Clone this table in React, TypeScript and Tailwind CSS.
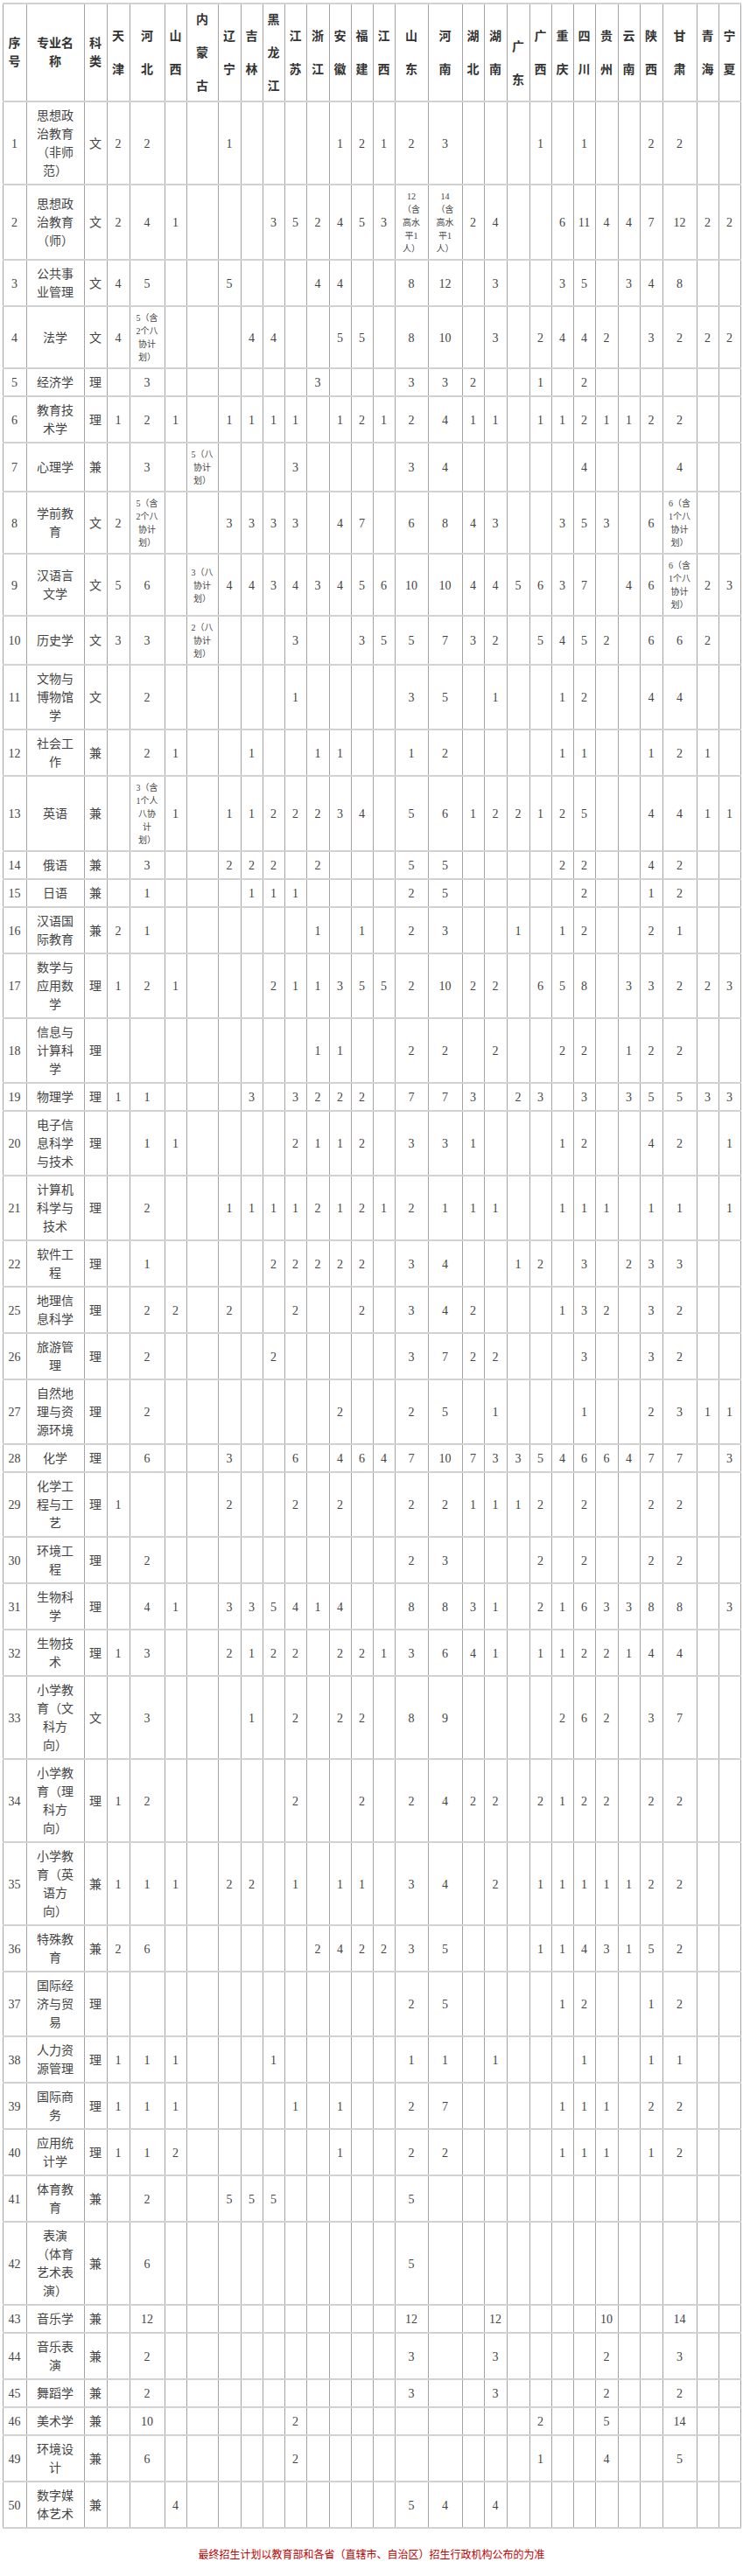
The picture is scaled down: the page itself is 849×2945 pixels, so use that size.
type Row = {
  no: number;
  name: string;
  kind: string;
  v: Record<string, string>;
};

const PROVINCES = [
  "天津", "河北", "山西", "内蒙古", "辽宁", "吉林", "黑龙江", "江苏", "浙江", "安徽",
  "福建", "江西", "山东", "河南", "湖北", "湖南", "广东", "广西", "重庆", "四川",
  "贵州", "云南", "陕西", "甘肃", "青海", "宁夏",
];

// column widths, written out so tailwind picks them up
const COLS = [
  "w-[26px]", "w-[40px]", "w-[25px]", "w-[36px]", "w-[26px]", "w-[25px]", "w-[25px]", "w-[25px]", "w-[26px]", "w-[25px]",
  "w-[25px]", "w-[25px]", "w-[38px]", "w-[39px]", "w-[25px]", "w-[26px]", "w-[26px]", "w-[25px]", "w-[25px]", "w-[25px]",
  "w-[26px]", "w-[25px]", "w-[26px]", "w-[39px]", "w-[25px]", "w-[25px]",
];

const ROWS: Row[] = [
  { no: 1, name: "思想政|治教育|（非师|范）", kind: "文", v: { 天津: "2", 河北: "2", 辽宁: "1", 安徽: "1", 福建: "2", 江西: "1", 山东: "2", 河南: "3", 广西: "1", 四川: "1", 陕西: "2", 甘肃: "2" } },
  { no: 2, name: "思想政|治教育|（师）", kind: "文", v: { 天津: "2", 河北: "4", 山西: "1", 黑龙江: "3", 江苏: "5", 浙江: "2", 安徽: "4", 福建: "5", 江西: "3", 山东: "12|（含|高水|平1|人）", 河南: "14|（含|高水|平1|人）", 湖北: "2", 湖南: "4", 重庆: "6", 四川: "11", 贵州: "4", 云南: "4", 陕西: "7", 甘肃: "12", 青海: "2", 宁夏: "2" } },
  { no: 3, name: "公共事|业管理", kind: "文", v: { 天津: "4", 河北: "5", 辽宁: "5", 浙江: "4", 安徽: "4", 山东: "8", 河南: "12", 湖南: "3", 重庆: "3", 四川: "5", 云南: "3", 陕西: "4", 甘肃: "8" } },
  { no: 4, name: "法学", kind: "文", v: { 天津: "4", 河北: "5（含|2个八|协计|划）", 吉林: "4", 黑龙江: "4", 安徽: "5", 福建: "5", 山东: "8", 河南: "10", 湖南: "3", 广西: "2", 重庆: "4", 四川: "4", 贵州: "2", 陕西: "3", 甘肃: "2", 青海: "2", 宁夏: "2" } },
  { no: 5, name: "经济学", kind: "理", v: { 河北: "3", 浙江: "3", 山东: "3", 河南: "3", 湖北: "2", 广西: "1", 四川: "2" } },
  { no: 6, name: "教育技|术学", kind: "理", v: { 天津: "1", 河北: "2", 山西: "1", 辽宁: "1", 吉林: "1", 黑龙江: "1", 江苏: "1", 安徽: "1", 福建: "2", 江西: "1", 山东: "2", 河南: "4", 湖北: "1", 湖南: "1", 广西: "1", 重庆: "1", 四川: "2", 贵州: "1", 云南: "1", 陕西: "2", 甘肃: "2" } },
  { no: 7, name: "心理学", kind: "兼", v: { 河北: "3", 内蒙古: "5（八|协计|划）", 江苏: "3", 山东: "3", 河南: "4", 四川: "4", 甘肃: "4" } },
  { no: 8, name: "学前教|育", kind: "文", v: { 天津: "2", 河北: "5（含|2个八|协计|划）", 辽宁: "3", 吉林: "3", 黑龙江: "3", 江苏: "3", 安徽: "4", 福建: "7", 山东: "6", 河南: "8", 湖北: "4", 湖南: "3", 重庆: "3", 四川: "5", 贵州: "3", 陕西: "6", 甘肃: "6（含|1个八|协计|划）" } },
  { no: 9, name: "汉语言|文学", kind: "文", v: { 天津: "5", 河北: "6", 内蒙古: "3（八|协计|划）", 辽宁: "4", 吉林: "4", 黑龙江: "3", 江苏: "4", 浙江: "3", 安徽: "4", 福建: "5", 江西: "6", 山东: "10", 河南: "10", 湖北: "4", 湖南: "4", 广东: "5", 广西: "6", 重庆: "3", 四川: "7", 云南: "4", 陕西: "6", 甘肃: "6（含|1个八|协计|划）", 青海: "2", 宁夏: "3" } },
  { no: 10, name: "历史学", kind: "文", v: { 天津: "3", 河北: "3", 内蒙古: "2（八|协计|划）", 江苏: "3", 福建: "3", 江西: "5", 山东: "5", 河南: "7", 湖北: "3", 湖南: "2", 广西: "5", 重庆: "4", 四川: "5", 贵州: "2", 陕西: "6", 甘肃: "6", 青海: "2" } },
  { no: 11, name: "文物与|博物馆|学", kind: "文", v: { 河北: "2", 江苏: "1", 山东: "3", 河南: "5", 湖南: "1", 重庆: "1", 四川: "2", 陕西: "4", 甘肃: "4" } },
  { no: 12, name: "社会工|作", kind: "兼", v: { 河北: "2", 山西: "1", 吉林: "1", 浙江: "1", 安徽: "1", 山东: "1", 河南: "2", 重庆: "1", 四川: "1", 陕西: "1", 甘肃: "2", 青海: "1" } },
  { no: 13, name: "英语", kind: "兼", v: { 河北: "3（含|1个人|八协|计|划）", 山西: "1", 辽宁: "1", 吉林: "1", 黑龙江: "2", 江苏: "2", 浙江: "2", 安徽: "3", 福建: "4", 山东: "5", 河南: "6", 湖北: "1", 湖南: "2", 广东: "2", 广西: "1", 重庆: "2", 四川: "5", 陕西: "4", 甘肃: "4", 青海: "1", 宁夏: "1" } },
  { no: 14, name: "俄语", kind: "兼", v: { 河北: "3", 辽宁: "2", 吉林: "2", 黑龙江: "2", 浙江: "2", 山东: "5", 河南: "5", 重庆: "2", 四川: "2", 陕西: "4", 甘肃: "2" } },
  { no: 15, name: "日语", kind: "兼", v: { 河北: "1", 吉林: "1", 黑龙江: "1", 江苏: "1", 山东: "2", 河南: "5", 四川: "2", 陕西: "1", 甘肃: "2" } },
  { no: 16, name: "汉语国|际教育", kind: "兼", v: { 天津: "2", 河北: "1", 浙江: "1", 福建: "1", 山东: "2", 河南: "3", 广东: "1", 重庆: "1", 四川: "2", 陕西: "2", 甘肃: "1" } },
  { no: 17, name: "数学与|应用数|学", kind: "理", v: { 天津: "1", 河北: "2", 山西: "1", 黑龙江: "2", 江苏: "1", 浙江: "1", 安徽: "3", 福建: "5", 江西: "5", 山东: "2", 河南: "10", 湖北: "2", 湖南: "2", 广西: "6", 重庆: "5", 四川: "8", 云南: "3", 陕西: "3", 甘肃: "2", 青海: "2", 宁夏: "3" } },
  { no: 18, name: "信息与|计算科|学", kind: "理", v: { 浙江: "1", 安徽: "1", 山东: "2", 河南: "2", 湖南: "2", 重庆: "2", 四川: "2", 云南: "1", 陕西: "2", 甘肃: "2" } },
  { no: 19, name: "物理学", kind: "理", v: { 天津: "1", 河北: "1", 吉林: "3", 江苏: "3", 浙江: "2", 安徽: "2", 福建: "2", 山东: "7", 河南: "7", 湖北: "3", 广东: "2", 广西: "3", 四川: "3", 云南: "3", 陕西: "5", 甘肃: "5", 青海: "3", 宁夏: "3" } },
  { no: 20, name: "电子信|息科学|与技术", kind: "理", v: { 河北: "1", 山西: "1", 江苏: "2", 浙江: "1", 安徽: "1", 福建: "2", 山东: "3", 河南: "3", 湖北: "1", 重庆: "1", 四川: "2", 陕西: "4", 甘肃: "2", 宁夏: "1" } },
  { no: 21, name: "计算机|科学与|技术", kind: "理", v: { 河北: "2", 辽宁: "1", 吉林: "1", 黑龙江: "1", 江苏: "1", 浙江: "2", 安徽: "1", 福建: "2", 江西: "1", 山东: "2", 河南: "1", 湖北: "1", 湖南: "1", 重庆: "1", 四川: "1", 贵州: "1", 陕西: "1", 甘肃: "1", 宁夏: "1" } },
  { no: 22, name: "软件工|程", kind: "理", v: { 河北: "1", 黑龙江: "2", 江苏: "2", 浙江: "2", 安徽: "2", 福建: "2", 山东: "3", 河南: "4", 广东: "1", 广西: "2", 四川: "3", 云南: "2", 陕西: "3", 甘肃: "3" } },
  { no: 25, name: "地理信|息科学", kind: "理", v: { 河北: "2", 山西: "2", 辽宁: "2", 江苏: "2", 福建: "2", 山东: "3", 河南: "4", 湖北: "2", 重庆: "1", 四川: "3", 贵州: "2", 陕西: "3", 甘肃: "2" } },
  { no: 26, name: "旅游管|理", kind: "理", v: { 河北: "2", 黑龙江: "2", 山东: "3", 河南: "7", 湖北: "2", 湖南: "2", 四川: "3", 陕西: "3", 甘肃: "2" } },
  { no: 27, name: "自然地|理与资|源环境", kind: "理", v: { 河北: "2", 安徽: "2", 山东: "2", 河南: "5", 湖南: "1", 四川: "1", 陕西: "2", 甘肃: "3", 青海: "1", 宁夏: "1" } },
  { no: 28, name: "化学", kind: "理", v: { 河北: "6", 辽宁: "3", 江苏: "6", 安徽: "4", 福建: "6", 江西: "4", 山东: "7", 河南: "10", 湖北: "7", 湖南: "3", 广东: "3", 广西: "5", 重庆: "4", 四川: "6", 贵州: "6", 云南: "4", 陕西: "7", 甘肃: "7", 宁夏: "3" } },
  { no: 29, name: "化学工|程与工|艺", kind: "理", v: { 天津: "1", 辽宁: "2", 江苏: "2", 安徽: "2", 山东: "2", 河南: "2", 湖北: "1", 湖南: "1", 广东: "1", 广西: "2", 四川: "2", 陕西: "2", 甘肃: "2" } },
  { no: 30, name: "环境工|程", kind: "理", v: { 河北: "2", 山东: "2", 河南: "3", 广西: "2", 四川: "2", 陕西: "2", 甘肃: "2" } },
  { no: 31, name: "生物科|学", kind: "理", v: { 河北: "4", 山西: "1", 辽宁: "3", 吉林: "3", 黑龙江: "5", 江苏: "4", 浙江: "1", 安徽: "4", 山东: "8", 河南: "8", 湖北: "3", 湖南: "1", 广西: "2", 重庆: "1", 四川: "6", 贵州: "3", 云南: "3", 陕西: "8", 甘肃: "8", 宁夏: "3" } },
  { no: 32, name: "生物技|术", kind: "理", v: { 天津: "1", 河北: "3", 辽宁: "2", 吉林: "1", 黑龙江: "2", 江苏: "2", 安徽: "2", 福建: "2", 江西: "1", 山东: "3", 河南: "6", 湖北: "4", 湖南: "1", 广西: "1", 重庆: "1", 四川: "2", 贵州: "2", 云南: "1", 陕西: "4", 甘肃: "4" } },
  { no: 33, name: "小学教|育（文|科方|向）", kind: "文", v: { 河北: "3", 吉林: "1", 江苏: "2", 安徽: "2", 福建: "2", 山东: "8", 河南: "9", 重庆: "2", 四川: "6", 贵州: "2", 陕西: "3", 甘肃: "7" } },
  { no: 34, name: "小学教|育（理|科方|向）", kind: "理", v: { 天津: "1", 河北: "2", 江苏: "2", 福建: "2", 山东: "2", 河南: "4", 湖北: "2", 湖南: "2", 广西: "2", 重庆: "1", 四川: "2", 贵州: "2", 陕西: "2", 甘肃: "2" } },
  { no: 35, name: "小学教|育（英|语方|向）", kind: "兼", v: { 天津: "1", 河北: "1", 山西: "1", 辽宁: "2", 吉林: "2", 江苏: "1", 安徽: "1", 福建: "1", 山东: "3", 河南: "4", 湖南: "2", 广西: "1", 重庆: "1", 四川: "1", 贵州: "1", 云南: "1", 陕西: "2", 甘肃: "2" } },
  { no: 36, name: "特殊教|育", kind: "兼", v: { 天津: "2", 河北: "6", 浙江: "2", 安徽: "4", 福建: "2", 江西: "2", 山东: "3", 河南: "5", 广西: "1", 重庆: "1", 四川: "4", 贵州: "3", 云南: "1", 陕西: "5", 甘肃: "2" } },
  { no: 37, name: "国际经|济与贸|易", kind: "理", v: { 山东: "2", 河南: "5", 重庆: "1", 四川: "2", 陕西: "1", 甘肃: "2" } },
  { no: 38, name: "人力资|源管理", kind: "理", v: { 天津: "1", 河北: "1", 山西: "1", 黑龙江: "1", 山东: "1", 河南: "1", 湖南: "1", 四川: "1", 陕西: "1", 甘肃: "1" } },
  { no: 39, name: "国际商|务", kind: "理", v: { 天津: "1", 河北: "1", 山西: "1", 江苏: "1", 安徽: "1", 山东: "2", 河南: "7", 重庆: "1", 四川: "1", 贵州: "1", 陕西: "2", 甘肃: "2" } },
  { no: 40, name: "应用统|计学", kind: "理", v: { 天津: "1", 河北: "1", 山西: "2", 安徽: "1", 山东: "2", 河南: "2", 重庆: "1", 四川: "1", 贵州: "1", 陕西: "1", 甘肃: "2" } },
  { no: 41, name: "体育教|育", kind: "兼", v: { 河北: "2", 辽宁: "5", 吉林: "5", 黑龙江: "5", 山东: "5" } },
  { no: 42, name: "表演|（体育|艺术表|演）", kind: "兼", v: { 河北: "6", 山东: "5" } },
  { no: 43, name: "音乐学", kind: "兼", v: { 河北: "12", 山东: "12", 湖南: "12", 贵州: "10", 甘肃: "14" } },
  { no: 44, name: "音乐表|演", kind: "兼", v: { 河北: "2", 山东: "3", 湖南: "3", 贵州: "2", 甘肃: "3" } },
  { no: 45, name: "舞蹈学", kind: "兼", v: { 河北: "2", 山东: "3", 湖南: "3", 贵州: "2", 甘肃: "2" } },
  { no: 46, name: "美术学", kind: "兼", v: { 河北: "10", 江苏: "2", 广西: "2", 贵州: "5", 甘肃: "14" } },
  { no: 49, name: "环境设|计", kind: "兼", v: { 河北: "6", 江苏: "2", 广西: "1", 贵州: "4", 甘肃: "5" } },
  { no: 50, name: "数字媒|体艺术", kind: "兼", v: { 山西: "4", 山东: "5", 河南: "4", 湖南: "4" } },
];

const cell =
  "border-x border-x-[#a3a3a3] border-y-2 border-y-[#d2d2d2] text-center align-middle";
const bodyCell = cell + " px-[2px] pt-[5px] pb-[4px] leading-[21px]";

const Lines = ({ text }: { text: string }) => (
  <>
    {text.split("|").map((l, i) => (
      <div key={i}>{l}</div>
    ))}
  </>
);

const Value = ({ value }: { value?: string }) => {
  if (!value) return null;
  if (value.includes("|")) {
    return (
      <div className="text-[10px] leading-[15px]">
        <Lines text={value} />
      </div>
    );
  }
  return <>{value}</>;
};

const ProvinceHead = ({ name }: { name: string }) => (
  <div
    className={
      "flex h-[110px] flex-col items-center justify-center gap-[17px] " +
      (name === "广东" ? "pt-[25px]" : "")
    }
  >
    {name.split("").map((c, i) => (
      <span key={i}>{c}</span>
    ))}
  </div>
);

export default function App() {
  return (
    <div className="bg-white pt-[3px] pb-[16px] font-['Liberation_Serif','Noto_Sans_CJK_SC',serif] text-[14px] text-[#444]">
      <table className="mx-auto w-[843px] table-fixed border-collapse">
        <colgroup>
          <col className="w-[27px]" />
          <col className="w-[66px]" />
          <col className="w-[26px]" />
          {COLS.map((c, i) => (
            <col key={i} className={c} />
          ))}
        </colgroup>
        <thead>
          <tr className="font-bold leading-[21px] text-[#333]">
            <th className={cell + " px-[2px] py-0"}>
              <div className="flex h-[110px] flex-col items-center justify-center">
                <span>序</span>
                <span>号</span>
              </div>
            </th>
            <th className={cell + " px-[6px] py-0"}>
              <div className="flex h-[110px] flex-col items-center justify-center">
                <span>专业名</span>
                <span>称</span>
              </div>
            </th>
            <th className={cell + " px-[2px] py-0"}>
              <div className="flex h-[110px] flex-col items-center justify-center">
                <span>科</span>
                <span>类</span>
              </div>
            </th>
            {PROVINCES.map((p) => (
              <th key={p} className={cell + " px-0 py-0"}>
                <ProvinceHead name={p} />
              </th>
            ))}
          </tr>
        </thead>
        <tbody>
          {ROWS.map((r) => (
            <tr key={r.no}>
              <td className={bodyCell}>{r.no}</td>
              <td className={bodyCell + " px-[6px]"}>
                <Lines text={r.name} />
              </td>
              <td className={bodyCell}>{r.kind}</td>
              {PROVINCES.map((p) => (
                <td key={p} className={bodyCell}>
                  <Value value={r.v[p]} />
                </td>
              ))}
            </tr>
          ))}
        </tbody>
      </table>
      <p className="mt-[21px] text-center font-['Noto_Sans_CJK_SC',sans-serif] text-[12px] leading-[16px] text-[#c00000]">
        最终招生计划以教育部和各省（直辖市、自治区）招生行政机构公布的为准
      </p>
    </div>
  );
}
